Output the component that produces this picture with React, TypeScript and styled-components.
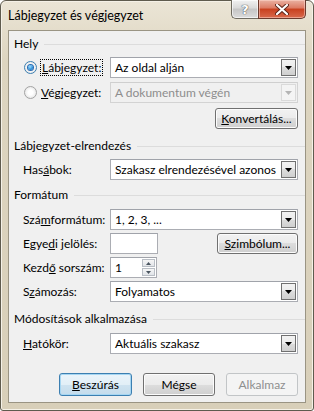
import React from 'react';
import styled, { createGlobalStyle } from 'styled-components';

const GlobalStyle = createGlobalStyle`
  html, body { margin: 0; padding: 0; background: #fff; }
  body {
    font-family: Lato, "Noto Sans", "Liberation Sans", sans-serif;
    font-size: 12px;
    color: #000;
  }
`;

const Window = styled.div`
  width: 314px;
  height: 411px;
  box-sizing: border-box;
  border: 1px solid #5f5b4e;
  border-radius: 6px 6px 3px 3px;
  background: linear-gradient(#ebe5d6, #ddd5c0 60px, #d8cfb9);
  box-shadow: inset 0 0 0 1px #f5f1e7;
  display: flex;
  flex-direction: column;
  padding: 0 7px 7px 7px;
`;

const TitleBar = styled.div`
  height: 29px;
  display: flex;
  justify-content: space-between;
  align-items: flex-start;
`;

const TitleText = styled.div`
  padding-top: 7px;
  line-height: 16px;
  font-size: 12.5px;
  color: #000;
`;

const Caption = styled.div`
  display: flex;
  margin-top: -1px;
`;

const HelpButton = styled.div`
  width: 27px;
  height: 19px;
  box-sizing: border-box;
  border: 1px solid #6f6b60;
  border-top: none;
  border-right: none;
  border-radius: 0 0 0 5px;
  background: linear-gradient(#f1f1f1, #d9d9d9 45%, #c5c5c5 50%, #dcdcdc);
  box-shadow: inset 0 0 0 1px rgba(255, 255, 255, 0.6);
  display: flex;
  align-items: center;
  justify-content: center;
  font: bold 13px "DejaVu Sans", sans-serif;
  color: #fff;
  text-shadow: 0 0 1px #444, 0 0 1px #444;
`;

const CloseButton = styled.div`
  width: 48px;
  height: 19px;
  box-sizing: border-box;
  border: 1px solid #6b3a2e;
  border-top: none;
  border-radius: 0 0 5px 0;
  background: linear-gradient(#eab2a3, #dc7a63 45%, #c8401f 50%, #d8694c);
  box-shadow: inset 0 0 0 1px rgba(255, 220, 210, 0.5);
  display: flex;
  align-items: center;
  justify-content: center;
`;

const Panel = styled.div`
  flex: 1;
  border: 1px solid #9a9483;
  background: #f0f0f0;
  padding: 5px 0 6px 5px;
  display: flex;
  flex-direction: column;
`;

const Header = styled.div<{ $top?: number }>`
  display: flex;
  align-items: center;
  gap: 6px;
  height: 16px;
  line-height: 16px;
  margin-top: ${p => p.$top ?? 0}px;
  &::after {
    content: '';
    flex: 1;
    height: 1px;
    background: #dcdcdc;
  }
`;

const Row = styled.div<{ $top: number; $h?: number; $radio?: boolean }>`
  display: flex;
  align-items: center;
  height: ${p => p.$h ?? 21}px;
  margin-top: ${p => p.$top}px;
  margin-right: 7px;
  padding-left: ${p => (p.$radio ? 10 : 9)}px;
`;

const Label = styled.div<{ $w?: number }>`
  width: ${p => p.$w ?? 87}px;
  flex: none;
  white-space: nowrap;
`;

const FocusLabel = styled.span`
  outline: 1px dotted #000;
  outline-offset: 0;
  padding: 0 1px;
`;

const RadioLabel = styled.div`
  width: 86px;
  flex: none;
  white-space: nowrap;
  display: flex;
  align-items: center;
  gap: 3px;
`;

const Radio = styled.span<{ $checked?: boolean }>`
  flex: none;
  width: 13px;
  height: 13px;
  box-sizing: border-box;
  border-radius: 50%;
  border: 1px solid ${p => (p.$checked ? '#3c7fb1' : '#a3a3a3')};
  background: radial-gradient(circle at 50% 50%, #ffffff 30%, #dcdcdc 100%);
  display: inline-flex;
  align-items: center;
  justify-content: center;
  margin-right: 1px;
  &::after {
    content: '';
    width: 5px;
    height: 5px;
    border-radius: 50%;
    display: ${p => (p.$checked ? 'block' : 'none')};
    background: radial-gradient(circle at 40% 35%, #9ee0ff, #1a7fd0 70%, #0a4f9c);
    box-shadow: 0 0 0 1px #2a6ab0;
  }
`;

const Select = styled.div<{ $disabled?: boolean }>`
  flex: 1;
  min-width: 0;
  height: 100%;
  box-sizing: border-box;
  border: 1px solid ${p => (p.$disabled ? '#d3d3d3' : '#abadb3')};
  border-top-color: ${p => (p.$disabled ? '#cfcfcf' : '#a0a3aa')};
  background: ${p => (p.$disabled ? '#f0f0f0' : '#fff')};
  color: ${p => (p.$disabled ? '#8d8d8d' : '#000')};
  display: flex;
  align-items: center;
  padding: 1px;
`;

const SelectText = styled.div`
  flex: 1;
  min-width: 0;
  padding-left: 3px;
  white-space: nowrap;
  overflow: hidden;
`;

const DropButton = styled.div<{ $disabled?: boolean }>`
  flex: none;
  width: 15px;
  height: 100%;
  box-sizing: border-box;
  border: 1px solid ${p => (p.$disabled ? '#dadada' : '#707070')};
  background: ${p =>
    p.$disabled ? '#f4f4f4' : 'linear-gradient(#f2f2f2, #ebebeb 50%, #dddddd 50%, #cfcfcf)'};
  display: flex;
  align-items: center;
  justify-content: center;
`;

const Input = styled.div<{ $w: number }>`
  flex: none;
  width: ${p => p.$w}px;
  height: 100%;
  box-sizing: border-box;
  border: 1px solid #abadb3;
  border-top-color: #a0a3aa;
  background: #fff;
  display: flex;
  align-items: center;
`;

const InputText = styled.div`
  flex: 1;
  padding-left: 4px;
`;

const Spinner = styled.div`
  width: 14px;
  height: 100%;
  display: flex;
  flex-direction: column;
  gap: 1px;
  padding: 1px 1px 1px 0;
  box-sizing: border-box;
`;

const SpinHalf = styled.div`
  flex: 1;
  box-sizing: border-box;
  border: 1px solid #b9bec5;
  background: linear-gradient(#f6f6f6, #e1e4e8);
  display: flex;
  align-items: center;
  justify-content: center;
`;

const Spacer = styled.div`
  flex: 1;
`;

const Button = styled.div<{ $w: number; $default?: boolean; $disabled?: boolean }>`
  flex: none;
  width: ${p => p.$w}px;
  height: 100%;
  box-sizing: border-box;
  border: 1px solid ${p => (p.$default ? '#3c7fb1' : p.$disabled ? '#c2c5c7' : '#707070')};
  border-radius: 3px;
  background: ${p =>
    p.$disabled
      ? '#f4f4f4'
      : p.$default
      ? 'linear-gradient(#eaf4fa, #e2eff7 50%, #cfe3f0 50%, #c4dcec)'
      : 'linear-gradient(#f2f2f2, #ebebeb 50%, #dddddd 50%, #cfcfcf)'};
  box-shadow: inset 0 0 0 1px ${p => (p.$default ? '#a6d6f2' : p.$disabled ? 'transparent' : '#fcfcfc')};
  color: ${p => (p.$disabled ? '#8e8f8f' : '#000')};
  display: flex;
  align-items: center;
  justify-content: center;
  white-space: nowrap;
`;

const ButtonRow = styled.div`
  display: flex;
  justify-content: flex-end;
  gap: 11px;
  height: 23px;
  margin-top: 19px;
  margin-right: 7px;
`;

const Arrow: React.FC<{ up?: boolean; color?: string; w?: number }> = ({ up, color = '#000', w = 7 }) => {
  const h = Math.ceil(w / 2);
  return (
    <svg width={w} height={h} viewBox={`0 0 ${w} ${h}`}>
      <polygon points={up ? `0,${h} ${w},${h} ${w / 2},0` : `0,0 ${w},0 ${w / 2},${h}`} fill={color} />
    </svg>
  );
};

const Combo: React.FC<{ text: string; disabled?: boolean }> = ({ text, disabled }) => (
  <Select $disabled={disabled}>
    <SelectText>{text}</SelectText>
    <DropButton $disabled={disabled}>
      <Arrow color={disabled ? '#b5b5b5' : '#000'} />
    </DropButton>
  </Select>
);

export default function App() {
  return (
    <>
      <GlobalStyle />
      <Window>
        <TitleBar>
          <TitleText>Lábjegyzet és végjegyzet</TitleText>
          <Caption>
            <HelpButton>?</HelpButton>
            <CloseButton>
              <svg width="14" height="11" viewBox="0 0 14 11">
                <path d="M2 1 L12 10 M12 1 L2 10" stroke="#5a2318" strokeWidth="4" strokeLinecap="round" />
                <path d="M2 1 L12 10 M12 1 L2 10" stroke="#fff" strokeWidth="2.2" strokeLinecap="round" />
              </svg>
            </CloseButton>
          </Caption>
        </TitleBar>
        <Panel>
          <Header>Hely</Header>
          <Row $top={5} $radio>
            <RadioLabel>
              <Radio $checked />
              <FocusLabel>
                <u>L</u>ábjegyzet:
              </FocusLabel>
            </RadioLabel>
            <Combo text="Az oldal alján" />
          </Row>
          <Row $top={4} $radio>
            <RadioLabel>
              <Radio />
              <span>
                <u>V</u>égjegyzet:
              </span>
            </RadioLabel>
            <Combo text="A dokumentum végén" disabled />
          </Row>
          <Row $top={5}>
            <Spacer />
            <Button $w={83}>
              <span>
                <u>K</u>onvertálás...
              </span>
            </Button>
          </Row>

          <Header $top={9}>Lábjegyzet-elrendezés</Header>
          <Row $top={5}>
            <Label>
              Has<u>á</u>bok:
            </Label>
            <Combo text="Szakasz elrendezésével azonos" />
          </Row>

          <Header $top={7}>Formátum</Header>
          <Row $top={6}>
            <Label>
              Szá<u>m</u>formátum:
            </Label>
            <Combo text="1, 2, 3, ..." />
          </Row>
          <Row $top={3}>
            <Label>
              Egye<u>d</u>i jelölés:
            </Label>
            <Input $w={48} />
            <Spacer />
            <Button $w={81}>
              <span>
                <u>S</u>zimbólum...
              </span>
            </Button>
          </Row>
          <Row $top={3}>
            <Label>
              Kezd<u>ő</u> sorszám:
            </Label>
            <Input $w={47}>
              <InputText>1</InputText>
              <Spinner>
                <SpinHalf>
                  <Arrow up w={5} color="#4a5560" />
                </SpinHalf>
                <SpinHalf>
                  <Arrow w={5} color="#4a5560" />
                </SpinHalf>
              </Spinner>
            </Input>
          </Row>
          <Row $top={3}>
            <Label>
              S<u>z</u>ámozás:
            </Label>
            <Combo text="Folyamatos" />
          </Row>

          <Header $top={9}>Módosítások alkalmazása</Header>
          <Row $top={6}>
            <Label>
              <u>H</u>atókör:
            </Label>
            <Combo text="Aktuális szakasz" />
          </Row>

          <ButtonRow>
            <Button $w={73} $default>
              <span>
                <u>B</u>eszúrás
              </span>
            </Button>
            <Button $w={72}>Mégse</Button>
            <Button $w={72} $disabled>
              Alkalmaz
            </Button>
          </ButtonRow>
        </Panel>
      </Window>
    </>
  );
}
